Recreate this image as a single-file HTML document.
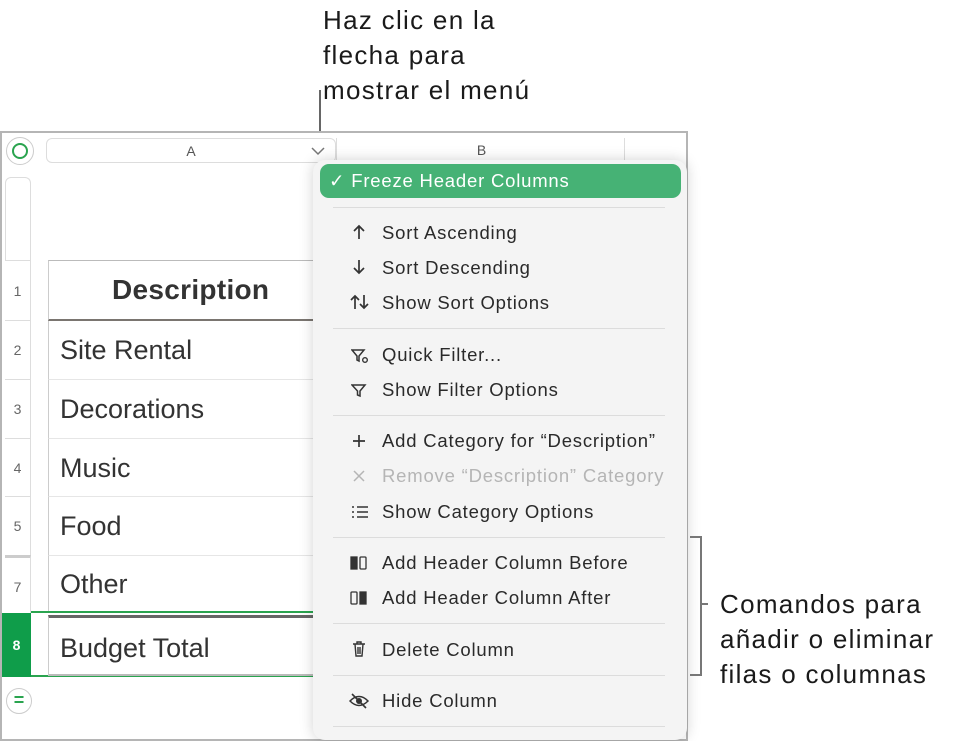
<!DOCTYPE html>
<html><head><meta charset="utf-8"><style>
*{margin:0;padding:0;box-sizing:border-box}
body{width:964px;height:734px;background:#fff;position:relative;overflow:hidden;font-family:"Liberation Sans",sans-serif;color:#1d1d1f}
.abs{position:absolute}
.ann{font-size:26px;line-height:35px;color:#1a1a1a;white-space:nowrap;letter-spacing:1.3px}
.frame{left:0;top:131px;width:688px;height:610px;border:2px solid #b5b5b5;background:#fff;overflow:hidden}
.rn{position:absolute;left:3px;width:26px;border-right:1px solid #ddd;font-size:14px;color:#666;text-align:center}
.cell{position:absolute;left:46px;width:280px;border-left:1px solid #ccc;border-bottom:1px solid #e6e6e6;font-size:27px;color:#333;padding-left:11px}
.menu{left:313px;top:160px;width:374px;height:580px;background:#f4f4f4;border-radius:12px;box-shadow:0 0 14px rgba(0,0,0,.18)}
.it{position:absolute;left:69px;font-size:18.5px;color:#2a2a2a;white-space:nowrap;letter-spacing:.8px}
.ic{position:absolute;left:37px;width:18px;text-align:center;font-size:18px;color:#2a2a2a}
.sep{position:absolute;left:20px;width:332px;height:1px;background:#dcdcdc}
</style></head><body>
<div class="abs ann" style="left:323px;top:3px">Haz clic en la<br>flecha para<br>mostrar el menú</div>
<div class="abs" style="left:319px;top:90px;width:2px;height:56px;background:#666"></div>

<div class="abs frame">
  <div class="abs" style="left:4px;top:4px;width:28px;height:28px;border:1px solid #ccc;border-radius:50%"></div>
  <div class="abs" style="left:10px;top:10px;width:16px;height:16px;border:2px solid #2aa44f;border-radius:50%"></div>
  <div class="abs" style="left:44px;top:5px;width:290px;height:25px;border:1px solid #ddd;border-radius:6px;font-size:14px;color:#555;text-align:center;line-height:24px">A</div>
  <div class="abs" style="left:334px;top:5px;width:290px;height:25px;border-left:1px solid #ddd;font-size:14px;color:#555;text-align:center;line-height:24px">B</div>
  <div class="abs" style="left:622px;top:5px;height:25px;border-left:1px solid #ddd"></div>
  <svg class="abs" style="left:308px;top:13px" width="16" height="10"><path d="M2 2 L8 8 L14 2" stroke="#777" stroke-width="1.5" fill="none"/></svg>
  <div class="abs" style="left:3px;top:44px;width:26px;height:84px;border:1px solid #ddd;border-bottom:none;border-radius:6px 6px 0 0"></div>
  <div class="rn" style="top:127px;height:60px;line-height:60px;border-top:1px solid #ddd">1</div>
  <div class="rn" style="top:187px;height:59px;line-height:59px;border-top:1px solid #ddd">2</div>
  <div class="rn" style="top:246px;height:59px;line-height:59px;border-top:1px solid #ddd">3</div>
  <div class="rn" style="top:305px;height:58px;line-height:58px;border-top:1px solid #ddd">4</div>
  <div class="rn" style="top:363px;height:59px;line-height:59px;border-top:1px solid #ddd">5</div>
  <div class="rn" style="top:422px;height:58px;line-height:58px;border-top:3px solid #ccc">7</div>
  <div class="rn" style="top:480px;height:64px;line-height:64px;background:#0f9d4a;color:#fff;font-weight:bold;border:none;left:0;width:29px">8</div>
  <div class="cell" style="top:127px;height:61px;border-top:1px solid #bbb;border-bottom:2px solid #7a7570;font-weight:bold;font-size:28px;line-height:58px;padding-left:63px;letter-spacing:.3px">Description</div>
  <div class="cell" style="top:188px;height:59px;line-height:58px">Site Rental</div>
  <div class="cell" style="top:247px;height:59px;line-height:58px">Decorations</div>
  <div class="cell" style="top:306px;height:58px;line-height:58px">Music</div>
  <div class="cell" style="top:364px;height:59px;line-height:58px">Food</div>
  <div class="cell" style="top:423px;height:57px;line-height:56px">Other</div>
  <div class="abs" style="left:29px;top:478px;width:300px;height:2px;background:#2aa44f"></div>
  <div class="abs" style="left:29px;top:542px;width:300px;height:2px;background:#2aa44f"></div>
  <div class="cell" style="top:482px;height:61px;line-height:60px;border-top:3px solid #666;border-bottom:2px solid #bbb">Budget Total</div>
  <div class="abs" style="left:4px;top:555px;width:26px;height:26px;border:1px solid #ccc;border-radius:50%;color:#2aa44f;text-align:center;font-size:18px;line-height:22px;font-weight:bold">=</div>
</div>

<div class="abs menu">
  <div class="abs" style="left:7px;top:4px;width:361px;height:34px;background:#46b275;border-radius:9px;color:#fff;font-size:18.5px;line-height:34px;padding-left:9px;letter-spacing:.8px">✓ Freeze Header Columns</div>
  <div class="sep" style="top:47px"></div>
  <svg class="abs" style="left:40px;top:64px" width="12" height="16"><path d="M6 15 V2 M1 7 L6 2 L11 7" stroke="#333" stroke-width="1.7" fill="none"/></svg>
  <div class="it" style="top:62px">Sort Ascending</div>
  <svg class="abs" style="left:40px;top:99px" width="12" height="16"><path d="M6 1 V14 M1 9 L6 14 L11 9" stroke="#333" stroke-width="1.7" fill="none"/></svg>
  <div class="it" style="top:97px">Sort Descending</div>
  <svg class="abs" style="left:37px;top:134px" width="20" height="16"><path d="M5 15 V2 M1 6 L5 2 L9 6 M14 1 V14 M10 10 L14 14 L18 10" stroke="#333" stroke-width="1.7" fill="none"/></svg>
  <div class="it" style="top:132px">Show Sort Options</div>
  <div class="sep" style="top:168px"></div>
  <svg class="abs" style="left:38px;top:188px" width="18" height="16"><path d="M1 2 H13 L8 8 V13 L6 12 V8 Z" stroke="#333" stroke-width="1.5" fill="none"/><circle cx="14" cy="12" r="2.3" stroke="#333" stroke-width="1.4" fill="none"/></svg>
  <div class="it" style="top:184px">Quick Filter...</div>
  <svg class="abs" style="left:38px;top:223px" width="18" height="16"><path d="M1 2 H14 L9 8 V13 L6.5 12 V8 Z" stroke="#333" stroke-width="1.5" fill="none"/></svg>
  <div class="it" style="top:219px">Show Filter Options</div>
  <div class="sep" style="top:255px"></div>
  <svg class="abs" style="left:39px;top:274px" width="14" height="14"><path d="M7 1 V13 M1 7 H13" stroke="#333" stroke-width="1.7"/></svg>
  <div class="it" style="top:270px">Add Category for “Description”</div>
  <svg class="abs" style="left:40px;top:310px" width="12" height="12"><path d="M1 1 L11 11 M11 1 L1 11" stroke="#b5b5b5" stroke-width="1.5"/></svg>
  <div class="it" style="top:305px;color:#b5b5b5">Remove “Description” Category</div>
  <svg class="abs" style="left:38px;top:345px" width="18" height="14"><path d="M1 2 H3 M1 7 H3 M1 12 H3 M6 2 H17 M6 7 H17 M6 12 H17" stroke="#333" stroke-width="1.6"/></svg>
  <div class="it" style="top:341px">Show Category Options</div>
  <div class="sep" style="top:377px"></div>
  <svg class="abs" style="left:37px;top:396px" width="18" height="14"><rect x="1" y="1" width="6" height="12" fill="#333" stroke="#333" stroke-width="1.3"/><rect x="10" y="1" width="6" height="12" rx="1" fill="none" stroke="#333" stroke-width="1.3"/></svg>
  <div class="it" style="top:392px">Add Header Column Before</div>
  <svg class="abs" style="left:37px;top:431px" width="18" height="14"><rect x="1" y="1" width="6" height="12" rx="1" fill="none" stroke="#333" stroke-width="1.3"/><rect x="10" y="1" width="6" height="12" fill="#333" stroke="#333" stroke-width="1.3"/></svg>
  <div class="it" style="top:427px">Add Header Column After</div>
  <div class="sep" style="top:463px"></div>
  <svg class="abs" style="left:39px;top:481px" width="14" height="17"><path d="M1 3 H13 M5 3 V1 H9 V3 M3 3 L4 15 H10 L11 3 M6 6 V13 M8 6 V13" stroke="#333" stroke-width="1.4" fill="none"/></svg>
  <div class="it" style="top:479px">Delete Column</div>
  <div class="sep" style="top:515px"></div>
  <svg class="abs" style="left:36px;top:533px" width="21" height="16"><path d="M1 8 Q10 -1 19 8 Q10 17 1 8 Z" stroke="#333" stroke-width="1.5" fill="none"/><circle cx="10" cy="8" r="3" fill="#333"/><path d="M3 1 L17 15" stroke="#333" stroke-width="1.6"/></svg>
  <div class="it" style="top:530px">Hide Column</div>
  <div class="sep" style="top:566px"></div>
</div>

<svg class="abs" style="left:686px;top:530px" width="30" height="150"><path d="M4 7 H15 V145 H4 M15 74 H22" stroke="#777" stroke-width="2" fill="none"/></svg>
<div class="abs ann" style="left:720px;top:587px">Comandos para<br>añadir o eliminar<br>filas o columnas</div>
</body></html>
